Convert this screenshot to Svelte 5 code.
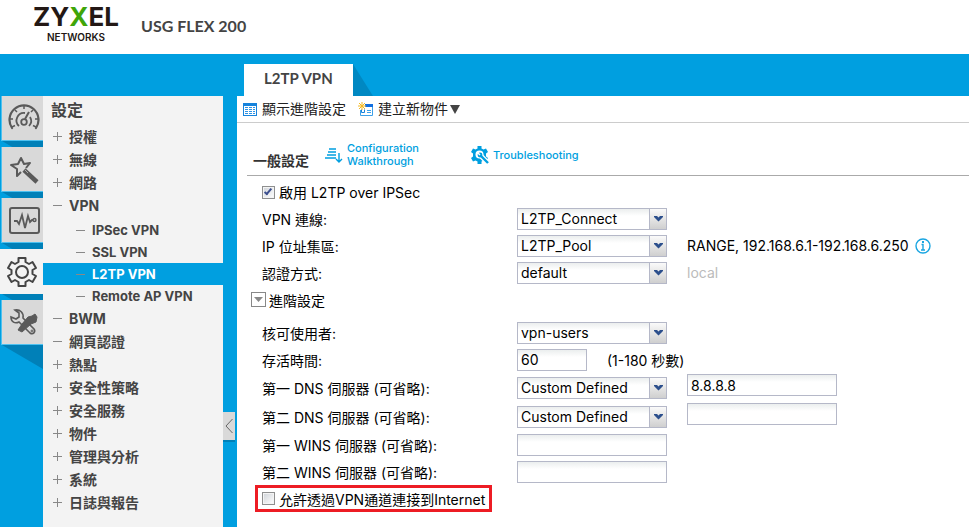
<script lang="ts">
    interface NavItem {
        label: string;
        sign: string;
        children?: string[];
    }

    const navItems: NavItem[] = [
        { label: "授權", sign: "plus" },
        { label: "無線", sign: "plus" },
        { label: "網路", sign: "plus" },
        { label: "VPN", sign: "minus", children: ["IPSec VPN", "SSL VPN", "L2TP VPN", "Remote AP VPN"] },
        { label: "BWM", sign: "minus" },
        { label: "網頁認證", sign: "minus" },
        { label: "熱點", sign: "plus" },
        { label: "安全性策略", sign: "plus" },
        { label: "安全服務", sign: "plus" },
        { label: "物件", sign: "plus" },
        { label: "管理與分析", sign: "plus" },
        { label: "系統", sign: "plus" },
        { label: "日誌與報告", sign: "plus" },
    ];

    const railItems = [
        { id: "dashboard", label: "儀表板" },
        { id: "wizard", label: "快速設定" },
        { id: "monitor", label: "監控" },
        { id: "config", label: "設定" },
        { id: "maintenance", label: "維護" },
    ];

    let activeRail = $state("config");
    let activePage = $state("L2TP VPN");
    let showAdvanced = $state(true);

    let enabled = $state(true);
    let connection = $state("L2TP_Connect");
    let pool = $state("L2TP_Pool");
    let auth = $state("default");
    let user = $state("vpn-users");
    let keepAlive = $state("60");
    let dns = $state([
        { label: "第一 DNS 伺服器 (可省略):", mode: "Custom Defined", address: "8.8.8.8" },
        { label: "第二 DNS 伺服器 (可省略):", mode: "Custom Defined", address: "" },
    ]);
    let wins = $state([
        { label: "第一 WINS 伺服器 (可省略):", address: "" },
        { label: "第二 WINS 伺服器 (可省略):", address: "" },
    ]);
    let allowInternet = $state(false);
</script>

{#snippet sign(kind: string)}
    <svg class="sign" viewBox="0 0 9 9" aria-hidden="true">
        <path d={kind === "plus" ? "M0 4.5H9M4.5 0V9" : "M0 4.5H9"} stroke="currentColor" />
    </svg>
{/snippet}

{#snippet chevron()}
    <span class="trigger" aria-hidden="true">
        <svg width="9" height="6" viewBox="0 0 9 6"><path d="M0 0h3l1.500 1.500L6 0h3v1L4.500 5.500 0 1z" fill="#2c4f8c" /></svg>
    </span>
{/snippet}

<div class="page">
    <header class="header">
        <div class="logo">
            <span class="logo-name">ZY<span class="logo-x">X</span>EL</span>
            <span class="logo-sub">NETWORKS</span>
        </div>
        <h1 class="model">USG FLEX 200</h1>
    </header>

    <div class="tabs">
        <button class="tab">L2TP VPN</button>
        <svg class="tab-shadow" viewBox="0 0 20 32" aria-hidden="true"><path d="M0 0L20 32H0z" fill="#0088c2" /></svg>
    </div>

    <div class="stage">
        <div class="rail">
            {#each railItems as item, i}
                <button
                    class="rail-button"
                    class:active={activeRail === item.id}
                    aria-label={item.label}
                    onclick={() => (activeRail = item.id)}
                >
                    <svg width="34" height="34" viewBox="0 0 34 34" fill="none" stroke="#5a5a5a" stroke-width="2" aria-hidden="true">
                        {#if item.id === "dashboard"}
                            <path d="M6 27A14.500 14.500 0 1 1 30 27" stroke-width="2.200" stroke-linecap="round" />
                            <path d="M18 5v3M9 9l2 2M27 9l-2 2M4 18h3M32 18h-3M6 26l3-1.500M30 26l-3-1.500" stroke-width="1.500" />
                            <path d="M13 25a7.500 7.500 0 0 1 6-13M24 16a7.500 7.500 0 0 1-1 9" stroke-width="1.800" />
                            <circle cx="18" cy="21" r="2.800" stroke-width="1.800" />
                            <path d="M19 18l4-7" />
                        {:else if item.id === "wizard"}
                            <path d="M14 21l-4 4v-7l-6-4 7-1 3-6 3 6 6-1-4 5M13 7" stroke-linejoin="round" transform="translate(1 -1)" />
                            <path d="M18 18L31 30" stroke-width="4.500" />
                            <path d="M19 18l3 3" stroke="#aaa" stroke-width="1" />
                        {:else if item.id === "monitor"}
                            <rect x="4" y="5" width="29" height="25" rx="2" />
                            <path d="M8 18h3l2 3 3-9 3 13 3-12 2 6 2-2h1" stroke-width="1.800" />
                            <circle cx="28.500" cy="17" r="1.500" stroke-width="1.400" />
                        {:else if item.id === "config"}
                            <path
                                d="M13.500 7V3h7v4l3.500 2 3.500-2 3.500 6-3.500 2v4l3.500 2-3.500 6-3.500-2-3.500 2v4h-7v-4L10 25l-3.500 2L3 21l3.500-2v-4L3 13l3.500-6L10 9z"
                                stroke="#444"
                                stroke-linejoin="round"
                            />
                            <circle cx="17" cy="17" r="6" stroke="#444" />
                        {:else}
                            <path d="M9 5l4 3v4l-3 2-5-2c0 5 4 7 8 5l11 11c3 2 6-1 4-4L17 13c1-5-3-9-8-8z" stroke-width="1.600" />
                            <path d="M16 19l6-7 4-1 3-2 2 3-1 5-5 2-9 8-4-2z" fill="#5a5a5a" stroke-width="1" />
                            <circle cx="26" cy="26" r="1" stroke-width="1" />
                        {/if}
                    </svg>
                </button>
                <svg
                    class="rail-shadow"
                    class:last={i === railItems.length - 1}
                    viewBox="0 0 41 24"
                    preserveAspectRatio="xMinYMin slice"
                    aria-hidden="true"
                >
                    <path d="M0 0H41V24z" fill="#0080b8" />
                </svg>
            {/each}
        </div>

        <nav class="nav">
            <h2 class="nav-title">設定</h2>
            <ul class="nav-list">
                {#each navItems as item}
                    <li>
                        <a class="nav-link" href="#top">{@render sign(item.sign)}{item.label}</a>
                        {#if item.children}
                            <ul class="nav-sub">
                                {#each item.children as child}
                                    <li>
                                        <a
                                            class="sub-link"
                                            class:selected={activePage === child}
                                            href="#{child.replaceAll(' ', '-')}"
                                            onclick={() => (activePage = child)}
                                        >{@render sign("minus")}{child}</a>
                                    </li>
                                {/each}
                            </ul>
                        {/if}
                    </li>
                {/each}
            </ul>
        </nav>

        <div class="gutter">
            <button class="collapse" aria-label="收合選單">
                <svg width="8" height="16" viewBox="0 0 8 16"><path d="M7.500 1L1 8l6.500 7" fill="none" stroke="#666" /></svg>
            </button>
        </div>

        <main class="main">
            <div class="toolbar">
                <button class="tool" onclick={() => (showAdvanced = !showAdvanced)}>
                    <svg width="14" height="13" viewBox="0 0 14 13" aria-hidden="true">
                        <path d="M0 0h14v13H0z" fill="#1683dc" />
                        <path d="M1 3h12v9H1z" fill="#fff" />
                        <path d="M2 4.500h3M2 6.500h3M2 8.500h3M2 10.500h3M6 4.500h3M6 6.500h3M6 8.500h3M6 10.500h3M10 4.500h2M10 6.500h2M10 8.500h2M10 10.500h2" stroke="#2d94e6" />
                    </svg>
                    顯示進階設定
                </button>
                <button class="tool">
                    <svg width="15" height="14" viewBox="0 0 15 14" aria-hidden="true">
                        <path d="M6 2h9v12H2V8" fill="#fff" />
                        <path d="M7 2h8v3H7z" fill="#126fe0" />
                        <path d="M14.500 5v8.500H2.500V8M9 8.500h4M9 10.500h4" fill="none" stroke="#3da0e8" />
                        <path d="M3.500 7.500v3h3v-3" fill="none" stroke="#1683dc" />
                        <path d="M4 0v8M0 4h8M1 1l6 6M7 1L1 7" stroke="#f5b921" />
                    </svg>
                    <span>建立新物件<svg class="caret" width="10" height="9" viewBox="0 0 10 9" aria-hidden="true"><path d="M0 0h10L5 9z" fill="#444" /></svg></span>
                </button>
            </div>

            <div class="section-head">
                <h2 class="section-title">一般設定</h2>
                <a class="help walkthrough" href="#walkthrough">
                    <svg width="18" height="17" viewBox="0 0 18 17" fill="none" stroke="#009fe0" stroke-width="1.400" aria-hidden="true">
                        <path d="M4 2h7M3 5h8M2 8h9M0 11h11" />
                        <path d="M14 6v9M11 12l3 3 3-3" />
                    </svg>
                    <span>Configuration<br />Walkthrough</span>
                </a>
                <a class="help" href="#troubleshooting">
                    <svg width="18" height="18" viewBox="0 0 18 18" aria-hidden="true">
                        <path d="M6.500 0h4v2.500l2 1 2.500-1 2 3.500-2 1.500v3L17 12l-2 3.500-2.500-1-2 1V18h-4v-2.500l-2-1-2.500 1L0 12l2-1.500v-3L0 6l2-3.500 2.500 1 2-1z" fill="#009fe0" />
                        <circle cx="8.500" cy="8.500" r="4" fill="#fff" />
                        <path d="M9 9l9 9" stroke="#fff" stroke-width="5" />
                        <path d="M9.500 9.500l7.500 7.500" stroke="#009fe0" stroke-width="2.400" />
                        <circle cx="9" cy="9" r="2.400" fill="#009fe0" />
                        <path d="M6 6l3 3" stroke="#fff" stroke-width="1.500" />
                    </svg>
                    Troubleshooting
                </a>
            </div>

            <form class="form">
                <label class="row check">
                    <input type="checkbox" bind:checked={enabled} />
                    啟用 L2TP over IPSec
                </label>
                <div class="row">
                    <label class="label" for="connection">VPN 連線:</label>
                    <div class="combo">
                        <select id="connection" bind:value={connection}><option>L2TP_Connect</option></select>
                        {@render chevron()}
                    </div>
                </div>
                <div class="row">
                    <label class="label" for="pool">IP 位址集區:</label>
                    <div class="combo">
                        <select id="pool" bind:value={pool}><option>L2TP_Pool</option></select>
                        {@render chevron()}
                    </div>
                    <span class="note">RANGE, 192.168.6.1-192.168.6.250</span>
                    <svg class="info" width="16" height="16" viewBox="0 0 16 16" aria-hidden="true">
                        <circle cx="8" cy="8" r="7" fill="none" stroke="#19a5e1" stroke-width="1.400" />
                        <path d="M6.500 6.500H8V12M6 12h4" fill="none" stroke="#19a5e1" stroke-width="1.400" />
                        <path d="M7 3h2v2H7z" fill="#19a5e1" />
                    </svg>
                </div>
                <div class="row">
                    <label class="label" for="auth">認證方式:</label>
                    <div class="combo">
                        <select id="auth" bind:value={auth}><option>default</option></select>
                        {@render chevron()}
                    </div>
                    <span class="note muted">local</span>
                </div>

                <button type="button" class="row advanced" aria-expanded={showAdvanced} onclick={() => (showAdvanced = !showAdvanced)}>
                    <svg width="15" height="15" viewBox="0 0 15 15" aria-hidden="true">
                        <rect x=".5" y=".5" width="14" height="14" fill="#fff" stroke="#888" />
                        <path d="M3 5h9L7.500 10z" fill="#888" />
                    </svg>
                    進階設定
                </button>

                {#if showAdvanced}
                    <div class="row">
                        <label class="label" for="user">核可使用者:</label>
                        <div class="combo">
                            <select id="user" bind:value={user}><option>vpn-users</option></select>
                            {@render chevron()}
                        </div>
                    </div>
                    <div class="row">
                        <label class="label" for="keepalive">存活時間:</label>
                        <input id="keepalive" class="text short" type="text" bind:value={keepAlive} />
                        <span class="note">(1-180 秒數)</span>
                    </div>
                    {#each dns as server, i}
                        <div class="row tall">
                            <label class="label" for="dns{i}">{server.label}</label>
                            <div class="combo">
                                <select id="dns{i}" bind:value={server.mode}><option>Custom Defined</option></select>
                                {@render chevron()}
                            </div>
                            <input class="text address" type="text" aria-label={server.label} bind:value={server.address} />
                        </div>
                    {/each}
                    {#each wins as server, i}
                        <div class="row">
                            <label class="label" for="wins{i}">{server.label}</label>
                            <input id="wins{i}" class="text" type="text" bind:value={server.address} />
                        </div>
                    {/each}
                    <label class="check highlight">
                        <input type="checkbox" bind:checked={allowInternet} />
                        允許透過VPN通道連接到Internet
                    </label>
                {/if}
            </form>
        </main>
    </div>
</div>

<style>
    :global(body) {
        margin: 0;
    }

    .page {
        display: flex;
        flex-direction: column;
        min-height: 100vh;
        background: #009fe0;
        color: #000;
        font-family: Inter, "Noto Sans CJK TC", sans-serif;
        font-size: 14px;
    }

    .page * {
        box-sizing: border-box;
    }

    button {
        padding: 0;
        border: 0;
        background: none;
        color: inherit;
        font: inherit;
        cursor: pointer;
    }

    a {
        color: inherit;
        text-decoration: none;
    }

    svg {
        flex: none;
    }

    .header {
        display: flex;
        align-items: center;
        gap: 21px;
        height: 54px;
        padding-left: 32px;
        background: #fff;
    }

    .logo {
        display: flex;
        flex-direction: column;
        align-items: center;
        width: 88px;
        padding-bottom: 6px;
        color: #231815;
    }

    .logo-name {
        font-size: 26px;
        font-weight: 700;
        line-height: 26px;
    }

    .logo-x {
        color: #3fa509;
    }

    .logo-sub {
        font-size: 10px;
        font-weight: 600;
        line-height: 14px;
    }

    .model {
        margin: 0;
        padding-bottom: 4px;
        color: #444;
        font-family: Lato, sans-serif;
        font-size: 16px;
        font-weight: 700;
    }

    .tabs {
        display: flex;
        align-items: flex-end;
        height: 42px;
        padding-left: 244px;
    }

    .tab {
        height: 32px;
        padding: 0 20px 4px;
        background: #fff;
        color: #444;
        font-family: Lato, sans-serif;
        font-size: 15px;
        font-weight: 700;
    }

    .tab-shadow {
        width: 20px;
        height: 32px;
    }

    .stage {
        display: flex;
        flex: 1;
    }

    .rail {
        display: flex;
        flex: none;
        flex-direction: column;
        align-items: flex-end;
        width: 43px;
    }

    .rail-button {
        display: flex;
        align-items: center;
        justify-content: center;
        width: 42px;
        height: 45px;
        border-left: 1px solid #4dc1f0;
        border-bottom: 1px solid #4dc1f0;
        background: #d9d9d9;
    }

    .rail-button.active {
        width: 43px;
        border: 0;
        background: #f3f3f3;
    }

    .rail-shadow {
        width: 41px;
        height: 6px;
    }

    .rail-shadow.last {
        height: 24px;
    }

    .nav {
        flex: none;
        width: 180px;
        background: #f3f3f3;
        color: #444;
        font-weight: 700;
    }

    .nav-title {
        margin: 0;
        padding-left: 8px;
        font-size: 16px;
        line-height: 29px;
    }

    .nav ul {
        margin: 0;
        padding: 0;
        list-style: none;
    }

    .nav-link,
    .sub-link {
        display: flex;
        align-items: center;
        gap: 7px;
        height: 23px;
        padding-left: 10px;
        line-height: 22px;
    }

    .nav-link {
        font-size: 14px;
    }

    .sub-link {
        height: 22px;
        padding-left: 33px;
        font-size: 13px;
    }

    .nav .nav-sub {
        padding: 2px 0 0;
    }

    .sub-link.selected {
        background: #009fe0;
        color: #fff;
    }

    .sign {
        width: 9px;
        height: 9px;
        color: #888;
    }

    .gutter {
        position: relative;
        flex: none;
        width: 14px;
    }

    .collapse {
        position: absolute;
        bottom: 87px;
        left: 0;
        display: flex;
        align-items: center;
        justify-content: center;
        width: 12px;
        height: 28px;
        background: #d9d9d9;
        box-shadow: 0 2px 0 #0080b8;
    }

    .main {
        flex: 1;
        min-width: 0;
        background: #fff;
    }

    .toolbar {
        display: flex;
        gap: 12px;
        height: 27px;
        padding-left: 6px;
        border-bottom: 1px solid #ccc;
        color: #222;
    }

    .tool {
        display: flex;
        align-items: center;
        gap: 5px;
        line-height: 26px;
    }

    .caret {
        margin-left: 2px;
    }

    .section-head {
        display: flex;
        align-items: center;
        height: 53px;
        margin-left: 10px;
        padding-bottom: 4px;
        padding-left: 6px;
        border-bottom: 1px solid #aaa;
    }

    .section-title {
        align-self: flex-end;
        margin: 0;
        color: #333;
        font-size: 14px;
        line-height: 20px;
    }

    .help {
        display: flex;
        align-items: center;
        gap: 4px;
        padding-top: 16px;
        color: #009fe0;
        font-size: 11px;
        font-weight: 500;
        line-height: 13px;
    }

    .walkthrough {
        margin-right: 52px;
        margin-left: 16px;
    }

    .form {
        padding: 3px 0 12px;
    }

    .row {
        display: flex;
        align-items: center;
        height: 27px;
        padding-left: 25px;
    }

    .row.tall {
        height: 29px;
    }

    .label {
        flex: none;
        width: 255px;
    }

    .check {
        display: flex;
        align-items: center;
        gap: 4px;
    }

    .row.check {
        height: 26px;
    }

    .check input {
        appearance: none;
        flex: none;
        width: 13px;
        height: 13px;
        margin: 0;
        border: 1px solid #8e8f8f;
        background: linear-gradient(135deg, #cfd3d8, #fff);
        box-shadow: inset 0 0 0 1px #f4f4f4;
    }

    .check input:checked::before {
        display: block;
        width: 4px;
        height: 8px;
        margin: 0 0 0 3px;
        border: solid #3c4f8e;
        border-width: 0 2px 2px 0;
        box-sizing: border-box;
        content: "";
        transform: rotate(40deg);
    }

    .combo {
        position: relative;
        flex: none;
        width: 150px;
    }

    .combo select,
    .text {
        width: 150px;
        height: 22px;
        margin: 0;
        padding: 0 3px;
        border: 1px solid #b5b8c8;
        border-radius: 0;
        background: linear-gradient(#ebeeee, #fff 7px);
        color: #000;
        font: inherit;
        line-height: 20px;
    }

    .combo select {
        display: block;
        appearance: none;
    }

    .trigger {
        position: absolute;
        top: 1px;
        right: 1px;
        display: flex;
        align-items: center;
        justify-content: center;
        width: 17px;
        height: 20px;
        border-left: 1px solid #b5b8c8;
        background: linear-gradient(#fafafa, #cfcfcf);
        pointer-events: none;
    }

    .text.short {
        width: 70px;
    }

    .address {
        align-self: flex-start;
        margin: 1px 0 0 20px;
    }

    .note {
        margin-left: 20px;
    }

    .muted {
        color: #bbb;
    }

    .info {
        margin-left: 6px;
    }

    .advanced {
        gap: 3px;
        margin-bottom: 6px;
        padding-left: 14px;
    }

    .highlight {
        width: fit-content;
        height: 27px;
        margin-left: 18px;
        padding: 0 4px;
        border: 3px solid #ed1c24;
    }
</style>
